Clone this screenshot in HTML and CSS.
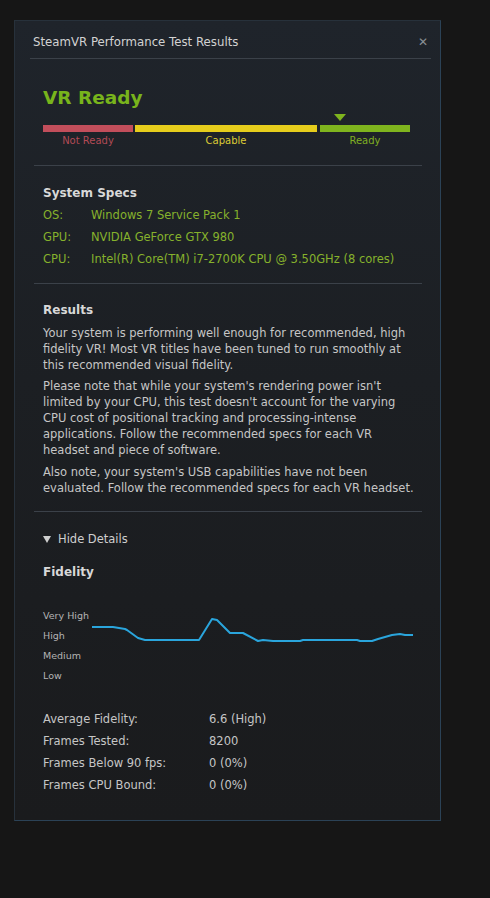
FILE: index.html
```html
<!DOCTYPE html>
<html lang="en">
<head>
	<meta charset="UTF-8">
	<title>SteamVR Performance Test Results</title>
	<link rel="stylesheet" href="styles.css">
</head>
<body>
	<div class="panel">
		<div class="head">
			<span class="head-title">SteamVR Performance Test Results</span>
			<span class="close">&#x2715;</span>
		</div>

		<div class="section verdict">
			<div class="big">VR Ready</div>
			<div class="meter">
				<div class="seg red"><div class="bar"></div><span>Not Ready</span></div>
				<div class="seg yellow"><div class="bar"></div><span>Capable</span></div>
				<div class="seg green"><div class="bar"></div><span>Ready</span><i class="pointer"></i></div>
			</div>
		</div>

		<div class="section specs">
			<h3>System Specs</h3>
			<div class="row"><span class="key">OS:</span><span>Windows 7 Service Pack 1</span></div>
			<div class="row"><span class="key">GPU:</span><span>NVIDIA GeForce GTX 980</span></div>
			<div class="row"><span class="key">CPU:</span><span>Intel(R) Core(TM) i7-2700K CPU @ 3.50GHz (8 cores)</span></div>
		</div>

		<div class="section results">
			<h3>Results</h3>
			<p>Your system is performing well enough for recommended, high fidelity VR! Most VR titles have been tuned to run smoothly at this recommended visual fidelity.</p>
			<p class="p2">Please note that while your system's rendering power isn't limited by your CPU, this test doesn't account for the varying CPU cost of positional tracking and processing-intense applications. Follow the recommended specs for each VR headset and piece of software.</p>
			<p>Also note, your system's USB capabilities have not been evaluated. Follow the recommended specs for each VR headset.</p>
		</div>

		<div class="details">
			<div class="toggle"><i class="arrow"></i>Hide Details</div>
			<h3>Fidelity</h3>
			<div class="chart">
				<div class="levels">
					<span>Very High</span>
					<span>High</span>
					<span>Medium</span>
					<span>Low</span>
				</div>
				<svg width="322" height="80" viewBox="0 0 322 80">
					<polyline fill="none" stroke="#2aa5dc" stroke-width="2" stroke-linejoin="round"
						points="0,21 21,21 33,23 35,24 46,32 53,34 107,34 120,13 125,14 138,27 151,27 166,35 171,34 181,35 208,35 211,34 265,34 268,35 280,35 286,33 300,29 308,28 313,29 321,29"/>
				</svg>
			</div>
			<div class="stats">
				<div class="row"><span class="key">Average Fidelity:</span><span>6.6 (High)</span></div>
				<div class="row"><span class="key">Frames Tested:</span><span>8200</span></div>
				<div class="row"><span class="key">Frames Below 90 fps:</span><span>0 (0%)</span></div>
				<div class="row"><span class="key">Frames CPU Bound:</span><span>0 (0%)</span></div>
			</div>
		</div>
	</div>
</body>
</html>
```

FILE: styles.css
```css
/* page */
body{
  margin: 0;
  background-color: #161616;
  font-family: "DejaVu Sans", Verdana, sans-serif;
  font-size: 11.5px;
  color: #c6c6c6;
}

/* dialog */
.panel{
  box-sizing: border-box;
  width: 427px;
  height: 801px;
  margin: 20px 0 0 14px;
  border: 1px solid #27313b;
  border-right-color: #2b4256;
  border-bottom-color: #2b4256;
  background: linear-gradient(#1f242b, #1c1f23 45%, #1a1b1d);
}
.head{
  display: flex;
  justify-content: space-between;
  align-items: center;
  margin: 0 9px 0 15px;
  padding: 11px 3px 6px 3px;
  line-height: 20px;
  border-bottom: 1px solid #3b4149;
}
.head-title{
  font-size: 11.75px;
  color: #d2d2d2;
}
.close{
  font-size: 12px;
  color: #8a8f96;
}

/* sections */
.section{
  margin: 0 18px 0 19px;
  padding-left: 9px;
  border-bottom: 1px solid #3b4149;
}
h3{
  margin: 0;
  font-size: 12px;
  font-weight: bold;
  line-height: 22px;
  color: #d8d8d8;
}
.row{
  display: flex;
  line-height: 22px;
}

/* verdict */
.verdict{
  padding: 27px 0 15px 9px;
}
.big{
  font-size: 18.5px;
  font-weight: bold;
  line-height: 24px;
  color: #78b41c;
}
.meter{
  display: flex;
  width: 367px;
  margin-top: 15px;
}
.seg{
  position: relative;
  display: flex;
  flex-direction: column;
  align-items: center;
  font-size: 10px;
  line-height: 18px;
}
.seg .bar{
  align-self: stretch;
  height: 7px;
}
.red{ width: 90px; margin-right: 2px; color: #b24a55; }
.red .bar{ background-color: #c24e5b; }
.yellow{ width: 182px; margin-right: 3px; color: #dccb35; }
.yellow .bar{ background-color: #e6cd1c; }
.green{ width: 90px; color: #7fae22; }
.green .bar{ background-color: #7fb41e; }
.pointer{
  position: absolute;
  top: -11px;
  left: 14px;
  border-left: 6px solid transparent;
  border-right: 6px solid transparent;
  border-top: 7px solid #7fb41e;
}

/* specs */
.specs{
  padding: 16px 0 13px 9px;
  color: #86b12c;
}
.specs .key{
  width: 48px;
}

/* results */
.results{
  padding: 15px 0 15px 9px;
}
.results p{
  margin: 6px 0 0;
  width: 372px;
  line-height: 16px;
}
.results h3 + p{
  margin-top: 4px;
}
.results .p2{
  margin-top: 5px;
}

/* details */
.details{
  padding: 17px 0 0 28px;
}
.toggle{
  display: flex;
  align-items: center;
  font-size: 11.5px;
  line-height: 20px;
  color: #cfcfcf;
}
.arrow{
  margin-right: 7px;
  border-left: 4px solid transparent;
  border-right: 4px solid transparent;
  border-top: 7px solid #cfcfcf;
}
.details h3{
  margin-top: 13px;
  line-height: 20px;
}
.chart{
  display: flex;
  margin-top: 24px;
}
.levels{
  display: flex;
  flex-direction: column;
  width: 49px;
  font-size: 9.5px;
  line-height: 20px;
  color: #b4b4b4;
}
.stats{
  margin-top: 22px;
}
.stats .key{
  width: 166px;
}
```
